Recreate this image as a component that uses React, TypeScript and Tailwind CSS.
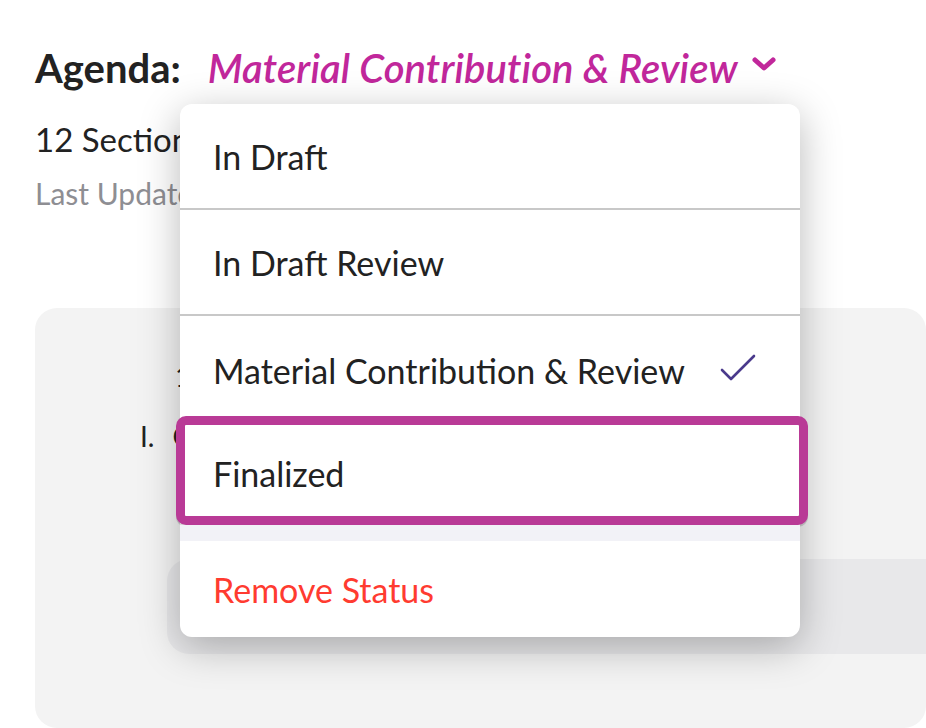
const statuses = ["In Draft", "In Draft Review"];

const App = () => {
    return (
        <main className="relative w-[926px] h-[728px] overflow-hidden bg-white font-['Lato',sans-serif] text-[#222]">
            <div className="pl-[35px] pt-[44px]">
                <div className="flex items-center gap-[27px]">
                    <h1 className="text-[40px] font-bold leading-[48px]">Agenda:</h1>
                    <div className="flex items-center gap-[14px] text-[#c1279b]">
                        <span className="text-[40px] font-semibold italic leading-[48px] tracking-[0.1px]">Material Contribution &amp; Review</span>
                        <svg width="24" height="16" viewBox="0 0 24 16" className="mt-[-6px]">
                            <polyline points="3,3 12,11 21,3" fill="none" stroke="currentColor" strokeWidth="5" strokeLinecap="round" strokeLinejoin="round" />
                        </svg>
                    </div>
                </div>
                <p className="mt-[27px] text-[33px] leading-[40px]">12 Sections</p>
                <p className="mt-[14px] text-[30px] leading-[40px] text-[#8e8e93]">Last Updated Today</p>

                {/* panel behind the menu */}
                <div className="mt-[95px] h-[420px] rounded-[22px] bg-[#f3f3f3] pt-[50px]">
                    <p className="pl-[140px] text-[28px] leading-[36px]">1</p>
                    <div className="mt-[24px] flex gap-[18px] pl-[105px] text-[28px] leading-[36px]">
                        <span>I.</span>
                        <span>Overview</span>
                    </div>
                    <div className="mt-[105px] ml-[132px] h-[95px] rounded-l-[22px] bg-[#e8e8ea]" />
                </div>
            </div>

            {/* status menu */}
            <div className="absolute left-[180px] top-[104px] w-[620px] rounded-[12px] bg-white shadow-[0_10px_40px_rgba(0,0,0,0.28)]">
                {statuses.map((s) => (
                    <div key={s}>
                        <div className="flex h-[104px] items-center pl-[33px] text-[34px]">{s}</div>
                        <div className="h-[2px] bg-[#c8c8c8]" />
                    </div>
                ))}
                <div className="flex h-[100px] items-center justify-between pl-[33px] pr-[44px] pt-[8px] text-[34px]">
                    <span>Material Contribution &amp; Review</span>
                    <svg width="36" height="28" viewBox="0 0 36 28" className="mt-[-4px] text-[#4a3a8c]">
                        <polyline points="2,16 11,25 34,2" fill="none" stroke="currentColor" strokeWidth="2.6" strokeLinecap="round" strokeLinejoin="round" />
                    </svg>
                </div>
                <div className="-ml-[4px] -mr-[8px] flex h-[109px] items-center rounded-[10px] border-[9px] border-[#b93a96] bg-white pl-[28px] pt-[6px] text-[34px] shadow-[0_2px_0_rgba(0,0,0,0.15)]">
                    Finalized
                </div>
                <div className="h-[16px] bg-[#f2f2f7]" />
                <div className="flex h-[96px] items-center pl-[33px] text-[34px] text-[#ff3b30]">Remove Status</div>
            </div>
        </main>
    );
};

export default App;
